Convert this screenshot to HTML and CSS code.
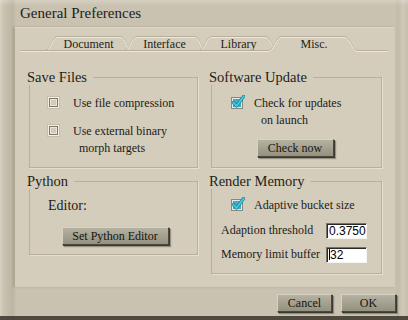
FILE: index.html
```html
<!DOCTYPE html>
<html>
<head>
<meta charset="utf-8">
<title>General Preferences</title>
<link rel="stylesheet" href="styles.css">
</head>
<body>
<div class="window">
  <div class="title">General Preferences</div>
  <div class="panel">
    <svg class="tabs" width="380" height="24" viewBox="15 28 380 24" xmlns="http://www.w3.org/2000/svg">
      <g class="tab">
        <path class="fill" d="M45,51.5 C51,51.5 52,37.5 58,37.5 H120 C126,37.5 127,51.5 133,51.5 Z"/>
        <path class="shade" d="M45,51.5 C51,51.5 52,37.5 58,37.5 H120 C126,37.5 127,51.5 133,51.5"/>
        <path class="edge" d="M45,51.5 C51,51.5 52,37.5 58,37.5 H120 C126,37.5 127,51.5 133,51.5"/>
        <text x="88.5" y="47.5">Document</text>
      </g>
      <g class="tab">
        <path class="fill" d="M124,51.5 C130,51.5 131,37.5 137,37.5 H194 C200,37.5 201,51.5 207,51.5 Z"/>
        <path class="shade" d="M124,51.5 C130,51.5 131,37.5 137,37.5 H194 C200,37.5 201,51.5 207,51.5"/>
        <path class="edge" d="M124,51.5 C130,51.5 131,37.5 137,37.5 H194 C200,37.5 201,51.5 207,51.5"/>
        <text x="164.5" y="47.5">Interface</text>
      </g>
      <g class="tab">
        <path class="fill" d="M199,51.5 C205,51.5 206,37.5 212,37.5 H265 C271,37.5 272,51.5 278,51.5 Z"/>
        <path class="shade" d="M199,51.5 C205,51.5 206,37.5 212,37.5 H265 C271,37.5 272,51.5 278,51.5"/>
        <path class="edge" d="M199,51.5 C205,51.5 206,37.5 212,37.5 H265 C271,37.5 272,51.5 278,51.5"/>
        <text x="238.5" y="47.5">Library</text>
      </g>
      <path class="shade" d="M20,51.5 H270 M356,51.5 H388"/>
      <path class="edge" d="M20,51.5 H270 M356,51.5 H388"/>
      <g class="tab active">
        <path class="fill" d="M268,51.5 C274,51.5 276,37.5 282,37.5 H344 C350,37.5 352,51.5 358,51.5 V53 H268 Z"/>
        <path class="shade" d="M268,51.5 C274,51.5 276,37.5 282,37.5 H344 C350,37.5 352,51.5 358,51.5"/>
        <path class="edge" d="M268,51.5 C274,51.5 276,37.5 282,37.5 H344 C350,37.5 352,51.5 358,51.5"/>
        <text x="314" y="47.5">Misc.</text>
      </g>
    </svg>

    <div class="groups">
      <fieldset class="group">
        <legend>Save Files</legend>
        <div class="gbody save">
          <div class="opt">
            <span class="cb"></span>
            <span class="lbl">Use file compression</span>
          </div>
          <div class="opt">
            <span class="cb"></span>
            <span class="lbl">Use external binary<br><span class="indent">morph targets</span></span>
          </div>
        </div>
      </fieldset>

      <fieldset class="group">
        <legend>Software Update</legend>
        <div class="gbody update">
          <div class="opt">
            <svg class="cbx" width="14" height="14" viewBox="0 0 14 14" xmlns="http://www.w3.org/2000/svg">
              <rect x="0.5" y="2.5" width="11" height="11" fill="#dfe9e8" stroke="#8a877e"/>
              <rect x="2" y="4" width="8" height="8" fill="#4aa9c4"/>
              <path d="M2.5,7.5 L5.5,11 L12.8,1.2" fill="none" stroke="#1c7f96" stroke-width="3.2" stroke-linecap="round" stroke-linejoin="round"/>
              <path d="M2.5,7.5 L5.5,11 L12.8,1.2" fill="none" stroke="#41d0e0" stroke-width="1.8" stroke-linecap="round" stroke-linejoin="round"/>
            </svg>
            <span class="lbl">Check for updates<br><span class="indent2">on launch</span></span>
          </div>
          <div class="btnrow"><button class="btn check">Check now</button></div>
        </div>
      </fieldset>

      <fieldset class="group">
        <legend>Python</legend>
        <div class="gbody python">
          <div class="editor">Editor:</div>
          <div class="btnrow"><button class="btn pyed">Set Python Editor</button></div>
        </div>
      </fieldset>

      <fieldset class="group">
        <legend>Render Memory</legend>
        <div class="gbody render">
          <div class="opt bucket">
            <svg class="cbx" width="14" height="14" viewBox="0 0 14 14" xmlns="http://www.w3.org/2000/svg">
              <rect x="0.5" y="2.5" width="11" height="11" fill="#dfe9e8" stroke="#8a877e"/>
              <rect x="2" y="4" width="8" height="8" fill="#4aa9c4"/>
              <path d="M2.5,7.5 L5.5,11 L12.8,1.2" fill="none" stroke="#1c7f96" stroke-width="3.2" stroke-linecap="round" stroke-linejoin="round"/>
              <path d="M2.5,7.5 L5.5,11 L12.8,1.2" fill="none" stroke="#41d0e0" stroke-width="1.8" stroke-linecap="round" stroke-linejoin="round"/>
            </svg>
            <span class="lbl">Adaptive bucket size</span>
          </div>
          <div class="frow">
            <span class="lbl">Adaption threshold</span>
            <div class="field">0.3750</div>
          </div>
          <div class="frow">
            <span class="lbl">Memory limit buffer</span>
            <div class="field"><span class="caret"></span>32</div>
          </div>
        </div>
      </fieldset>
    </div>
  </div>
  <div class="footer">
    <button class="btn foot">Cancel</button>
    <button class="btn foot">OK</button>
  </div>
</div>
</body>
</html>
```

FILE: styles.css
```css
html, body {
  margin: 0;
  padding: 0;
}

body {
  width: 408px;
  height: 320px;
  overflow: hidden;
  font-family: "Liberation Serif", "Times New Roman", serif;
  color: #1c1b18;
  background: #c9c2b0;
}

.window {
  height: 320px;
  box-sizing: border-box;
  display: flex;
  flex-direction: column;
  border-bottom: 4px solid #4f493d;
  background:
    linear-gradient(180deg, rgba(255,255,255,0.22) 0, rgba(255,255,255,0) 6px),
    linear-gradient(90deg, #d8d2c2 0, #cbc4b2 3px, #c0b9a6 10px, #bcb5a2 13px, #c9c2b0 16px, #c9c2b0 395px, #c2bba9 398px, #d0c9b8 403px, #c6bfad 408px);
}

.title {
  height: 27px;
  line-height: 27px;
  padding-left: 20px;
  font-size: 15px;
  color: #1e1d1a;
}

.panel {
  height: 260px;
  margin: 0 13px 0 14px;
  box-sizing: border-box;
  background: #d4cdbb;
  border-top: 1px solid #dcd6c7;
  border-left: 1px solid #b0a895;
  box-shadow: -1px 0 2px rgba(60, 50, 30, 0.18);
}

.tabs {
  display: block;
}

.tabs text {
  font-family: "Liberation Serif", "Times New Roman", serif;
  font-size: 12px;
  fill: #1e1d1a;
  text-anchor: middle;
}

.tabs .fill {
  fill: #d4cdbb;
  stroke: none;
}

.tabs .shade {
  fill: none;
  stroke: #b7af9c;
  stroke-width: 1;
  transform: translate(0, -1px);
}

.tabs .edge {
  fill: none;
  stroke: #ede8dc;
  stroke-width: 1;
}

.groups {
  display: grid;
  grid-template-columns: 169px 171px;
  column-gap: 13px;
  row-gap: 5px;
  padding: 17px 0 0 14px;
  align-items: start;
}

.group {
  margin: 0;
  padding: 0;
  min-width: 0;
  border: 1px solid #b8b09d;
  box-shadow: 1px 1px 0 #e4dfd1;
}

.group legend {
  margin-left: -3px;
  padding: 0 6px 0 0;
  font-size: 14.5px;
  line-height: 16px;
  background: #d4cdbb;
  color: #1e1d1a;
}

.opt {
  display: flex;
  align-items: flex-start;
  font-size: 12px;
  line-height: 17px;
}

.lbl {
  font-size: 12px;
  line-height: 17px;
}

.indent {
  padding-left: 6px;
}

.indent2 {
  padding-left: 7px;
}

.cb {
  flex: none;
  width: 11px;
  height: 11px;
  box-sizing: border-box;
  margin: 2px 14px 0 0;
  border: 1px solid #f3efe5;
  background: #d2cbb9;
  box-shadow: inset 0 0 0 1px #7d776a, inset 0 0 0 2px #ece7db, 0 0 0 1px #c4bdab;
}

.cbx {
  flex: none;
  display: block;
  margin-right: 9px;
}

.save {
  padding: 10px 0 10px 18px;
}

.save .opt + .opt {
  margin-top: 11px;
}

.update {
  padding: 10px 0 10px 19px;
}

.btnrow {
  display: flex;
  justify-content: center;
}

.update .btnrow {
  margin: 10px 0 0 -19px;
  padding-right: 3px;
}

.btn {
  display: block;
  height: 18px;
  padding: 0;
  box-sizing: border-box;
  font-family: "Liberation Serif", "Times New Roman", serif;
  font-size: 12px;
  line-height: 16px;
  color: #15140f;
  background: linear-gradient(180deg, #b6b2a2 0, #a5a191 50%, #95917f 100%);
  border: 1px solid;
  border-color: #d6d2c4 #4b483f #4b483f #d6d2c4;
  box-shadow: 1px 1px 0 #3b3932, 2px 2px 1px rgba(40, 35, 25, 0.35);
}

.check {
  width: 77px;
}

.python {
  padding: 8px 0 9px 18px;
}

.editor {
  font-size: 14px;
  line-height: 17px;
}

.python .btnrow {
  margin: 13px 0 0 -18px;
  padding-left: 3px;
}

.pyed {
  width: 107px;
}

.render {
  padding: 8px 0 10px 9px;
}

.bucket {
  margin-left: 10px;
}

.frow {
  display: grid;
  grid-template-columns: 105px 41px;
  align-items: center;
  height: 17px;
}

.bucket + .frow {
  margin-top: 8px;
}

.frow + .frow {
  margin-top: 7px;
}

.field {
  width: 41px;
  height: 16px;
  box-sizing: border-box;
  background: #ffffff;
  border: 1px solid;
  border-color: #77736a #f7f5ef #f7f5ef #77736a;
  box-shadow: inset 1px 1px 0 #2b2a27;
  font-family: "Liberation Sans", Arial, sans-serif;
  font-size: 12px;
  line-height: 14px;
  padding-left: 2px;
  color: #000;
  white-space: nowrap;
  overflow: hidden;
}

.caret {
  display: inline-block;
  width: 1px;
  height: 11px;
  background: #000;
  vertical-align: -1px;
}

.footer {
  flex: 1;
  display: flex;
  justify-content: flex-end;
  align-items: flex-start;
  gap: 9px;
  padding: 7px 12px 0 0;
}

.foot {
  width: 55px;
}
```
